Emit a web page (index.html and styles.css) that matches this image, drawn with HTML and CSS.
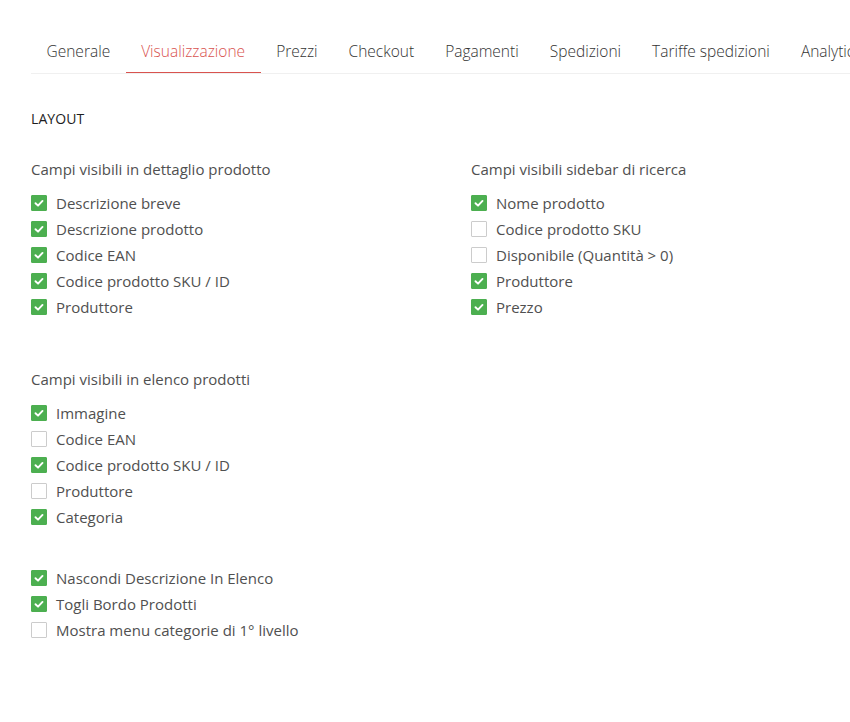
FILE: index.html
```html
<!DOCTYPE html>
<html lang="it">
<head>
<meta charset="utf-8">
<title>Impostazioni - Visualizzazione</title>
<link rel="stylesheet" href="styles.css">
</head>
<body>
<div class="page">
  <nav class="tabs">
    <a class="tab">Generale</a>
    <a class="tab active">Visualizzazione</a>
    <a class="tab">Prezzi</a>
    <a class="tab">Checkout</a>
    <a class="tab">Pagamenti</a>
    <a class="tab">Spedizioni</a>
    <a class="tab">Tariffe spedizioni</a>
    <a class="tab">Analytics</a>
  </nav>

  <h2 class="heading">LAYOUT</h2>

  <div class="columns">
    <section class="group">
      <h3 class="group-title">Campi visibili in dettaglio prodotto</h3>
      <ul class="checks">
        <li class="check on"><span class="box"><svg viewBox="0 0 16 16"><polyline points="4,8.3 6.9,11 12,5.6"/></svg></span>Descrizione breve</li>
        <li class="check on"><span class="box"><svg viewBox="0 0 16 16"><polyline points="4,8.3 6.9,11 12,5.6"/></svg></span>Descrizione prodotto</li>
        <li class="check on"><span class="box"><svg viewBox="0 0 16 16"><polyline points="4,8.3 6.9,11 12,5.6"/></svg></span>Codice EAN</li>
        <li class="check on"><span class="box"><svg viewBox="0 0 16 16"><polyline points="4,8.3 6.9,11 12,5.6"/></svg></span>Codice prodotto SKU / ID</li>
        <li class="check on"><span class="box"><svg viewBox="0 0 16 16"><polyline points="4,8.3 6.9,11 12,5.6"/></svg></span>Produttore</li>
      </ul>
    </section>
    <section class="group">
      <h3 class="group-title">Campi visibili sidebar di ricerca</h3>
      <ul class="checks">
        <li class="check on"><span class="box"><svg viewBox="0 0 16 16"><polyline points="4,8.3 6.9,11 12,5.6"/></svg></span>Nome prodotto</li>
        <li class="check"><span class="box"></span>Codice prodotto SKU</li>
        <li class="check"><span class="box"></span>Disponibile (Quantità &gt; 0)</li>
        <li class="check on"><span class="box"><svg viewBox="0 0 16 16"><polyline points="4,8.3 6.9,11 12,5.6"/></svg></span>Produttore</li>
        <li class="check on"><span class="box"><svg viewBox="0 0 16 16"><polyline points="4,8.3 6.9,11 12,5.6"/></svg></span>Prezzo</li>
      </ul>
    </section>
  </div>

  <section class="group group-list">
    <h3 class="group-title">Campi visibili in elenco prodotti</h3>
    <ul class="checks">
      <li class="check on"><span class="box"><svg viewBox="0 0 16 16"><polyline points="4,8.3 6.9,11 12,5.6"/></svg></span>Immagine</li>
      <li class="check"><span class="box"></span>Codice EAN</li>
      <li class="check on"><span class="box"><svg viewBox="0 0 16 16"><polyline points="4,8.3 6.9,11 12,5.6"/></svg></span>Codice prodotto SKU / ID</li>
      <li class="check"><span class="box"></span>Produttore</li>
      <li class="check on"><span class="box"><svg viewBox="0 0 16 16"><polyline points="4,8.3 6.9,11 12,5.6"/></svg></span>Categoria</li>
    </ul>
  </section>

  <ul class="checks extra">
    <li class="check on"><span class="box"><svg viewBox="0 0 16 16"><polyline points="4,8.3 6.9,11 12,5.6"/></svg></span>Nascondi Descrizione In Elenco</li>
    <li class="check on"><span class="box"><svg viewBox="0 0 16 16"><polyline points="4,8.3 6.9,11 12,5.6"/></svg></span>Togli Bordo Prodotti</li>
    <li class="check"><span class="box"></span>Mostra menu categorie di 1° livello</li>
  </ul>
</div>
</body>
</html>
```
FILE: styles.css
```css
html, body {
  margin: 0;
  padding: 0;
  background: #ffffff;
  overflow: hidden;
}
body {
  font-family: "Open Sans", "Noto Sans", sans-serif;
  color: #505050;
}
.page {
  padding: 30px 0 0 31px;
}
.tabs {
  display: flex;
  white-space: nowrap;
  border-bottom: 1px solid #f0f0f0;
  overflow: hidden;
}
.tab {
  flex: none;
  padding: 11px 15.5px 11px;
  line-height: 20px;
  font-size: 15.5px;
  font-weight: 300;
  color: #333333;
  border-bottom: 2px solid transparent;
  margin-bottom: -1px;
  cursor: pointer;
}
.tab.active {
  color: #d9534f;
  border-bottom-color: #d9534f;
}
.heading {
  margin: 32px 0 0;
  font-size: 14px;
  font-weight: 500;
  line-height: 26px;
  color: #1e1e1e;
  letter-spacing: 0.1px;
}
.columns {
  display: grid;
  grid-template-columns: 440px 1fr;
  margin-top: 24px;
}
.group-title {
  margin: 0;
  font-size: 15px;
  font-weight: 500;
  line-height: 26px;
  color: #505050;
}
.checks {
  list-style: none;
  margin: 8px 0 0;
  padding: 0;
}
.check {
  display: flex;
  align-items: center;
  gap: 9px;
  height: 26px;
  font-size: 15px;
  font-weight: 500;
  color: #505050;
}
.box {
  flex: none;
  width: 16px;
  height: 16px;
  box-sizing: border-box;
  border: 1px solid #cccccc;
  border-radius: 1px;
  background: #ffffff;
  display: flex;
  align-items: center;
  justify-content: center;
}
.check.on .box {
  background: #4caf50;
  border-color: #4caf50;
}
.box svg {
  width: 14px;
  height: 14px;
  fill: none;
  stroke: #ffffff;
  stroke-width: 2.2;
  stroke-linecap: round;
  stroke-linejoin: round;
}
.group-list {
  margin-top: 46px;
}
.checks.extra {
  margin-top: 35px;
}
```
